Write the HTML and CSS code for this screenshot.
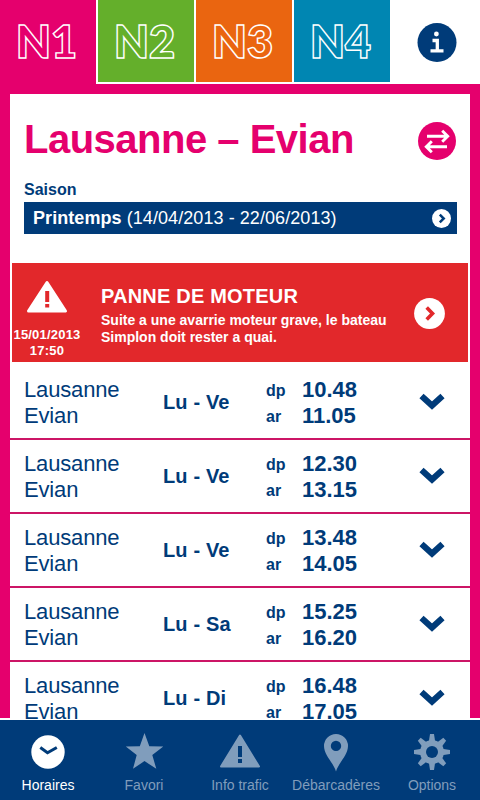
FILE: index.html
```html
<!DOCTYPE html>
<html lang="fr">
<head>
<meta charset="utf-8">
<title>Horaires</title>
<link rel="stylesheet" href="styles.css">
</head>
<body>
<div class="app">
  <header class="tabs">
    <div class="tab tab-active"><span class="n">N</span><span>1</span></div>
    <div class="tab tab-green"><span class="n">N</span><span>2</span></div>
    <div class="tab tab-orange"><span class="n">N</span><span>3</span></div>
    <div class="tab tab-blue"><span class="n">N</span><span>4</span></div>
    <div class="info">
      <svg width="40" height="40" viewBox="0 0 40 40"><circle cx="20" cy="20.500" r="19.500" fill="#003b79"/><circle cx="19.400" cy="12" r="2.400" fill="#fff"/><path d="M15.500 18.500h4.800v10M13.500 28.800h13" fill="none" stroke="#fff" stroke-width="3.300"/></svg>
    </div>
  </header>
  <main class="frame">
    <div class="card">
      <div class="heading">
        <h1>Lausanne – Evian</h1>
        <svg width="38" height="38" viewBox="0 0 38 38"><circle cx="19" cy="19" r="19" fill="#e5006d"/><g fill="none" stroke="#fff" stroke-width="2.900"><path d="M9 14.200h20M24.200 8.700l5.500 5.500-5.500 5.500M29 24.700H9M13.800 19.200l-5.500 5.500 5.500 5.500"/></g></svg>
      </div>
      <div class="label">Saison</div>
      <div class="season">
        <span class="season-text"><b>Printemps</b> (14/04/2013 - 22/06/2013)</span>
        <svg width="19" height="19" viewBox="0 0 19 19"><circle cx="9.500" cy="9.500" r="9.500" fill="#fff"/><path d="M7.800 5.700l3.900 3.800-3.900 3.800" fill="none" stroke="#003b79" stroke-width="2.500"/></svg>
      </div>
      <section class="alert">
        <div class="alert-when">
          <svg width="42" height="33" viewBox="0 0 42 33"><path d="M21 2.500L39.500 31H2.500Z" fill="#fff" stroke="#fff" stroke-width="3" stroke-linejoin="round"/><path d="M19.200 11h4v11h-4zM19.200 24h4v3.500h-4z" fill="#e2282b"/></svg>
          <div>15/01/2013<br>17:50</div>
        </div>
        <div class="alert-body">
          <h2>PANNE DE MOTEUR</h2>
          <p>Suite a une avarrie moteur grave, le bateau<br>Simplon doit rester a quai.</p>
        </div>
        <svg class="alert-go" width="31" height="31" viewBox="0 0 31 31"><circle cx="15.500" cy="15.500" r="15.400" fill="#fff"/><path d="M12.700 9.600l5.800 5.900-5.800 5.900" fill="none" stroke="#e2282b" stroke-width="3.600"/></svg>
      </section>
      <div class="rows">
        <div class="row"><div class="route">Lausanne<br>Evian</div><div class="days">Lu - Ve</div><div class="kind">dp<br>ar</div><div class="time">10.48<br>11.05</div><svg class="chev" width="26" height="18" viewBox="0 0 26 18"><path d="M2.500 3L13 12.500 23.500 3" fill="none" stroke="#003b79" stroke-width="6.200"/></svg></div>
        <div class="row"><div class="route">Lausanne<br>Evian</div><div class="days">Lu - Ve</div><div class="kind">dp<br>ar</div><div class="time">12.30<br>13.15</div><svg class="chev" width="26" height="18" viewBox="0 0 26 18"><path d="M2.500 3L13 12.500 23.500 3" fill="none" stroke="#003b79" stroke-width="6.200"/></svg></div>
        <div class="row"><div class="route">Lausanne<br>Evian</div><div class="days">Lu - Ve</div><div class="kind">dp<br>ar</div><div class="time">13.48<br>14.05</div><svg class="chev" width="26" height="18" viewBox="0 0 26 18"><path d="M2.500 3L13 12.500 23.500 3" fill="none" stroke="#003b79" stroke-width="6.200"/></svg></div>
        <div class="row"><div class="route">Lausanne<br>Evian</div><div class="days">Lu - Sa</div><div class="kind">dp<br>ar</div><div class="time">15.25<br>16.20</div><svg class="chev" width="26" height="18" viewBox="0 0 26 18"><path d="M2.500 3L13 12.500 23.500 3" fill="none" stroke="#003b79" stroke-width="6.200"/></svg></div>
        <div class="row"><div class="route">Lausanne<br>Evian</div><div class="days">Lu - Di</div><div class="kind">dp<br>ar</div><div class="time">16.48<br>17.05</div><svg class="chev" width="26" height="18" viewBox="0 0 26 18"><path d="M2.500 3L13 12.500 23.500 3" fill="none" stroke="#003b79" stroke-width="6.200"/></svg></div>
      </div>
    </div>
  </main>
  <nav class="nav">
    <a class="item item-active"><svg width="40" height="40" viewBox="0 0 40 40"><circle cx="20" cy="20" r="16.700"/><path d="M12.300 15.500l7.200 5.200 9.300-5.200" fill="none" stroke="#003b79" stroke-width="3"/></svg>Horaires</a>
    <a class="item"><svg width="40" height="40" viewBox="0 0 40 40"><path d="M20.500 1l4.800 13.300 14 .2-11 8.600 4 13.700-11.800-7.700L9 36.800l3.700-13.700L1.800 14.500l14-.2z"/></svg>Favori</a>
    <a class="item"><svg width="42" height="40" viewBox="0 0 42 40"><path d="M21 3.500L40 34.500H2Z" stroke="currentColor" stroke-width="2" stroke-linejoin="round"/><path d="M19 14h4v11h-4zM19 27h4v4h-4z" fill="#003b79"/></svg>Info trafic</a>
    <a class="item"><svg width="40" height="40" viewBox="0 0 40 40"><path fill-rule="evenodd" d="M20 39.500C17.500 31 8 23 8 14a12 12 0 0 1 24 0c0 9-9.500 17-12 25.500zM20 8.700a5.200 5.200 0 1 0 0 10.400a5.200 5.200 0 0 0 0-10.400z"/></svg>Débarcadères</a>
    <a class="item"><svg width="40" height="40" viewBox="0 0 40 40"><g transform="translate(20 20)"><g id="teeth"><path id="tooth" d="M-3.200-10L-2-18H2L3.200-10V10L2 18H-2L-3.200 10Z"/><use href="#tooth" transform="rotate(45)"/></g><use href="#teeth" transform="rotate(90)"/><circle r="12"/><circle r="6" fill="#003b79"/></g></svg>Options</a>
  </nav>
</div>
</body>
</html>
```
FILE: styles.css
```css
* { box-sizing: border-box; }
body { margin: 0; background: #fff; color: #003b79; font-family: "Liberation Sans", Arial, sans-serif; }
h1, h2, p { margin: 0; }
svg { display: block; flex: none; }
.app { width: 480px; height: 800px; display: flex; flex-direction: column; overflow: hidden; }

.tabs { height: 84px; display: flex; gap: 2px; flex: none; }
.tab {
  width: 96px; height: 82px; padding-left: 16px; display: flex;
  font: 800 45px/83px Lato, sans-serif;
  color: transparent; -webkit-text-stroke: 1.400px #fff;
}
.n { width: 35px; }
.tab-active { height: 84px; background: #e5006d; }
.tab-green { background: #64af2b; }
.tab-orange { background: #ea6510; }
.tab-blue { background: #0086b2; }
.info { flex: 1; padding: 22px 0 0 25px; }

.frame {
  height: 636px; flex: none; padding: 10px 10px 0; overflow: hidden;
  background: linear-gradient(#e5006d, #e5006d) 0 0 / 100% 634px no-repeat;
}
.card { background: #fff; height: 626px; overflow: hidden; }
.heading { height: 85px; display: flex; justify-content: space-between; padding: 28px 14px 0 14px; }
h1 { font-size: 40px; line-height: 34px; letter-spacing: -.5px; color: #e5006d; white-space: nowrap; }
.label { padding-left: 14px; font-size: 16px; font-weight: 700; line-height: 21px; height: 23px; }
.season {
  margin: 0 13px 0 14px; height: 32px; padding: 0 6px 0 9px; background: #003b79; color: #fff;
  display: flex; align-items: center; justify-content: space-between; font-size: 18px; white-space: nowrap;
}
.season-text { letter-spacing: .07px; padding-top: 1px; }
.alert { margin: 29px 2px 4px; height: 99px; background: #e2282b; color: #fff; display: flex; font-weight: 700; }
.alert-when { width: 89px; padding: 17px 19px 0 0; display: flex; flex-direction: column; align-items: center; font-size: 13px; line-height: 16px; letter-spacing: .2px; text-align: center; }
.alert-when div { margin-top: 14px; }
.alert-body { width: 313px; padding-top: 22px; white-space: nowrap; }
h2 { font-size: 20px; line-height: 23px; letter-spacing: .2px; }
.alert-body p { font-size: 14px; line-height: 17px; margin-top: 4px; }
.alert-go { margin-top: 35px; }

.row {
  height: 74px; border-bottom: 2px solid #cc1566; padding: 11px 0 0 14px;
  display: grid; grid-template-columns: 139px 103px 36px 117px 26px; align-items: start;
  font-size: 22px; line-height: 26px; white-space: nowrap;
}
.route { letter-spacing: -.15px; }
.days { font-size: 20px; font-weight: 700; letter-spacing: .15px; padding-top: 12px; }
.kind { font-size: 16px; font-weight: 700; padding-top: 1px; }
.time { font-weight: 700; }
.chev { margin-top: 16px; }

.nav { height: 80px; flex: none; background: #003b79; display: flex; }
.item { width: 96px; padding-top: 12px; display: flex; flex-direction: column; align-items: center; color: #809dbc; font-size: 14px; line-height: 16px; }
.item svg { fill: currentColor; margin-bottom: 5px; }
.item-active { color: #fff; }
```
